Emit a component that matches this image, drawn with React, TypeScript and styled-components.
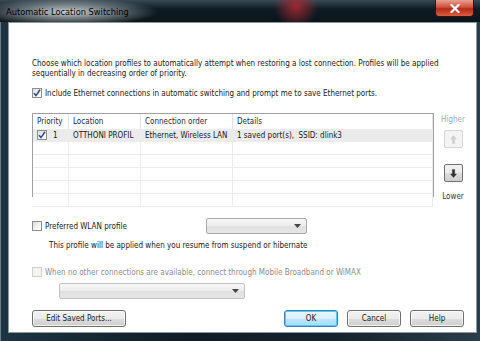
import React from 'react';
import styled, { createGlobalStyle } from 'styled-components';

const GlobalStyle = createGlobalStyle`
  html, body {
    margin: 0;
    padding: 0;
    background: #0d1a22;
  }
  * { box-sizing: border-box; }
`;

const Window = styled.div`
  width: 480px;
  height: 341px;
  display: flex;
  flex-direction: column;
  background: linear-gradient(90deg, #1d3442 0%, #0e1c25 40%, #14242e 70%, #2a3d4a 100%);
  font-family: 'DejaVu Sans Condensed', 'DejaVu Sans', sans-serif;
  font-size: 8px;
  color: #1a1a1a;
  overflow: hidden;
`;

const TitleBar = styled.div`
  height: 22px;
  display: flex;
  align-items: flex-start;
  justify-content: space-between;
  padding-left: 6px;
  background:
    radial-gradient(ellipse 90px 14px at 68px 12px, rgba(235, 240, 242, 0.85), rgba(220, 230, 235, 0) 100%),
    radial-gradient(circle 22px at 296px 6px, rgba(170, 40, 50, 0.9), rgba(120, 20, 30, 0) 100%),
    linear-gradient(180deg, #3a4a55 0%, #0f1c24 40%, #0a141b 100%);
`;

const Title = styled.div`
  margin-top: 6px;
  font-family: 'DejaVu Sans Condensed', 'DejaVu Sans', sans-serif;
  font-size: 9.2px;
  color: #000;
`;

const CloseButton = styled.div`
  width: 39px;
  height: 17px;
  margin-right: 6px;
  border: 1px solid #3a1010;
  border-top: none;
  border-radius: 0 0 4px 4px;
  background: linear-gradient(180deg, #e8a090 0%, #d0503a 45%, #b8281a 55%, #d86040 100%);
  display: flex;
  align-items: center;
  justify-content: center;
`;

const Body = styled.div`
  flex: 1;
  display: flex;
  padding: 0 8px 8px 7px;
  border-left: 1px solid #6b7d88;
`;

const Client = styled.div`
  flex: 1;
  background: #ffffff;
  border: 1px solid #8a98a2;
  padding: 36px 12px 0 23px;
  display: flex;
  flex-direction: column;
`;

const Intro = styled.p`
  margin: 0;
  width: 412px;
  line-height: 10px;
`;

const CheckRow = styled.label<{ $disabled?: boolean }>`
  display: flex;
  align-items: center;
  gap: 3px;
  color: ${(p) => (p.$disabled ? '#8d8d8d' : '#1a1a1a')};
  white-space: nowrap;
`;

const Box = styled.span<{ $disabled?: boolean }>`
  width: 10px;
  height: 10px;
  flex: none;
  border: 1px solid ${(p) => (p.$disabled ? '#cfcfcf' : '#8e8f8f')};
  background: ${(p) =>
    p.$disabled
      ? '#f4f4f4'
      : 'linear-gradient(135deg, #dcdcdc 0%, #f5f5f5 60%, #ffffff 100%)'};
  display: flex;
  align-items: center;
  justify-content: center;
`;

const TableArea = styled.div`
  display: flex;
  margin-top: 15px;
  gap: 8px;
`;

const Table = styled.div`
  width: 402px;
  height: 84px;
  border: 1px solid #a0a0a0;
  background: #fff;
  display: grid;
  grid-template-columns: 36px 72px 92px 1fr;
  grid-auto-rows: 13px;
  grid-template-rows: 15px;
  align-content: start;
`;

const HeadCell = styled.div`
  padding-left: 4px;
  display: flex;
  align-items: center;
  border-right: 1px solid #e3e3e3;
  color: #1e2a3a;
`;

const Cell = styled.div<{ $selected?: boolean }>`
  padding-left: 4px;
  display: flex;
  align-items: center;
  gap: 6px;
  white-space: pre;
  border-right: 1px solid #ececec;
  border-bottom: 1px solid #ececec;
  background: ${(p) => (p.$selected ? '#ebebeb' : '#fff')};
`;

const OrderColumn = styled.div`
  width: 22px;
  display: flex;
  flex-direction: column;
  align-items: center;
  padding-top: 2px;
`;

const SideLabel = styled.div<{ $disabled?: boolean }>`
  color: ${(p) => (p.$disabled ? '#a8a8a8' : '#3a3a3a')};
  font-size: 8px;
`;

const ArrowButton = styled.div<{ $disabled?: boolean }>`
  width: 19px;
  height: 18px;
  margin: 6px 0 10px;
  border: 1px solid ${(p) => (p.$disabled ? '#d5d5d5' : '#707070')};
  border-radius: 2px;
  background: ${(p) =>
    p.$disabled ? '#f4f4f4' : 'linear-gradient(180deg, #f2f2f2 0%, #ebebeb 50%, #dddddd 51%, #cfcfcf 100%)'};
  display: flex;
  align-items: center;
  justify-content: center;
  &:last-of-type {
    margin-bottom: 4px;
  }
`;

const WlanRow = styled.div`
  display: flex;
  align-items: center;
  margin-top: 17px;
`;

const Combo = styled.div<{ $width: number; $disabled?: boolean }>`
  width: ${(p) => p.$width}px;
  height: 16px;
  border: 1px solid ${(p) => (p.$disabled ? '#c2c2c2' : '#a9a9a9')};
  border-radius: 2px;
  background: linear-gradient(180deg, #f7f7f7 0%, #ececec 50%, #e0e0e0 51%, #e6e6e6 100%);
  display: flex;
  align-items: center;
  justify-content: flex-end;
  padding-right: 5px;
`;

const Hint = styled.div`
  margin: 7px 0 0 17px;
`;

const BroadbandRow = styled(CheckRow)`
  margin-top: 17px;
`;

const SubCombo = styled.div`
  margin: 6px 0 0 27px;
`;

const Footer = styled.div`
  display: flex;
  align-items: center;
  margin-top: 11px;
`;

const Button = styled.div<{ $width: number; $default?: boolean; $first?: boolean }>`
  width: ${(p) => p.$width}px;
  height: 17px;
  border: 1px solid ${(p) => (p.$default ? '#3c7fb1' : '#707070')};
  border-radius: 3px;
  background: ${(p) =>
    p.$default
      ? 'linear-gradient(180deg, #eaf6fd 0%, #d9f0fc 50%, #bee6fd 51%, #a7d9f5 100%)'
      : 'linear-gradient(180deg, #f2f2f2 0%, #ebebeb 50%, #dddddd 51%, #cfcfcf 100%)'};
  box-shadow: inset 0 0 0 1px ${(p) => (p.$default ? '#48d0f7' : 'rgba(255,255,255,0.7)')};
  display: flex;
  align-items: center;
  justify-content: center;
  color: #1a1a1a;
  margin-left: ${(p) => (p.$first ? '0' : p.$default ? 'auto' : '9px')};
`;

const Check = () => (
  <svg width="8" height="8" viewBox="0 0 8 8">
    <path d="M1 4.2 L3 6.6 L7 0.8" fill="none" stroke="#2b4a8c" strokeWidth="1.5" />
  </svg>
);

const Caret = ({ color = '#444' }: { color?: string }) => (
  <svg width="7" height="4" viewBox="0 0 7 4">
    <path d="M0 0 H7 L3.5 4 Z" fill={color} />
  </svg>
);

const Arrow = ({ up, color }: { up?: boolean; color: string }) => (
  <svg width="7" height="9" viewBox="0 0 7 9" style={{ transform: up ? 'none' : 'rotate(180deg)' }}>
    <path d="M3.5 0.5 L6.5 4 H4.7 V8.5 H2.3 V4 H0.5 Z" fill={color} stroke={color} strokeWidth="0.4" />
  </svg>
);

const rows = [
  { checked: true, priority: '1', location: 'OTTHONI PROFIL', order: 'Ethernet, Wireless LAN', details: '1 saved port(s),  SSID: dlink3' },
];

const App: React.FC = () => {
  const emptyRows = 5;
  return (
    <>
      <GlobalStyle />
      <Window>
        <TitleBar>
          <Title>Automatic Location Switching</Title>
          <CloseButton>
            <svg width="10" height="9" viewBox="0 0 10 9">
              <path d="M1.5 1 L8.5 8 M8.5 1 L1.5 8" stroke="#fff" strokeWidth="2.2" strokeLinecap="square" />
            </svg>
          </CloseButton>
        </TitleBar>
        <Body>
          <Client>
            <Intro>
              Choose which location profiles to automatically attempt when restoring a lost connection. Profiles will be applied
              sequentially in decreasing order of priority.
            </Intro>
            <CheckRow style={{ marginTop: 9 }}>
              <Box>
                <Check />
              </Box>
              Include Ethernet connections in automatic switching and prompt me to save Ethernet ports.
            </CheckRow>

            <TableArea>
              <Table>
                <HeadCell>Priority</HeadCell>
                <HeadCell>Location</HeadCell>
                <HeadCell>Connection order</HeadCell>
                <HeadCell>Details</HeadCell>
                {rows.map((r) => (
                  <React.Fragment key={r.location}>
                    <Cell $selected>
                      <Box>{r.checked && <Check />}</Box>
                      {r.priority}
                    </Cell>
                    <Cell $selected>{r.location}</Cell>
                    <Cell $selected>{r.order}</Cell>
                    <Cell $selected>{r.details}</Cell>
                  </React.Fragment>
                ))}
                {Array.from({ length: emptyRows * 4 }).map((_, i) => (
                  <Cell key={i} />
                ))}
              </Table>
              <OrderColumn>
                <SideLabel $disabled>Higher</SideLabel>
                <ArrowButton $disabled>
                  <Arrow up color="#d0d0d0" />
                </ArrowButton>
                <ArrowButton>
                  <Arrow color="#333" />
                </ArrowButton>
                <SideLabel>Lower</SideLabel>
              </OrderColumn>
            </TableArea>

            <WlanRow>
              <CheckRow style={{ width: 174 }}>
                <Box />
                Preferred WLAN profile
              </CheckRow>
              <Combo $width={101}>
                <Caret />
              </Combo>
            </WlanRow>
            <Hint>This profile will be applied when you resume from suspend or hibernate</Hint>

            <BroadbandRow $disabled>
              <Box $disabled />
              When no other connections are available, connect through Mobile Broadband or WiMAX
            </BroadbandRow>
            <SubCombo>
              <Combo $width={186} $disabled>
                <Caret />
              </Combo>
            </SubCombo>

            <Footer>
              <Button $width={94} $first>Edit Saved Ports...</Button>
              <Button $width={54} $default>OK</Button>
              <Button $width={54}>Cancel</Button>
              <Button $width={54}>Help</Button>
            </Footer>
          </Client>
        </Body>
      </Window>
    </>
  );
};

export default App;
